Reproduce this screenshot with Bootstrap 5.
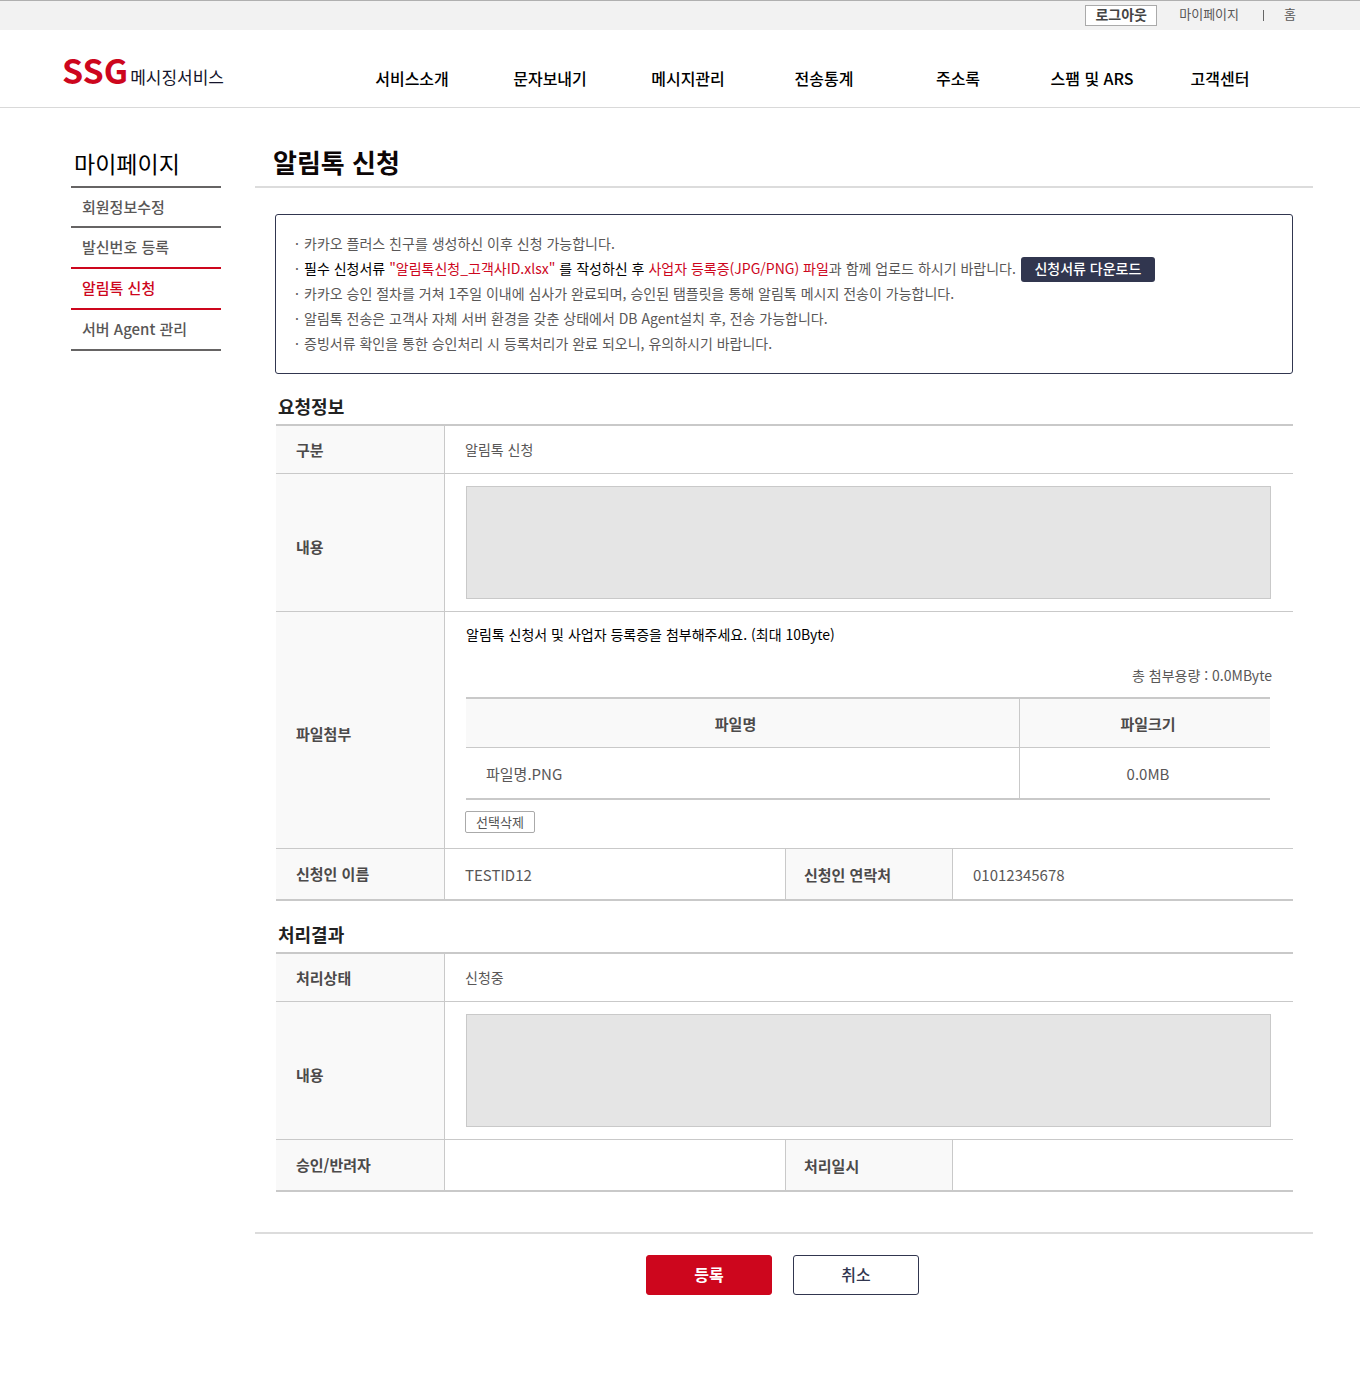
<!DOCTYPE html>
<html lang="ko">
<head>
<meta charset="utf-8">
<meta name="viewport" content="width=device-width, initial-scale=1">
<title>알림톡 신청 - SSG 메시징서비스</title>
<link href="https://cdn.jsdelivr.net/npm/bootstrap@5.3.0/dist/css/bootstrap.min.css" rel="stylesheet">
<style>
  :root { --brand: #cd061d; --navy: #31364f; --line: #c9c9c9; --soft: #dcdcdc; --ink: #595757; }
  body { font-family: "Noto Sans CJK KR", "Noto Sans", sans-serif; font-size: 14px; line-height: 20px; color: var(--ink); background: #fff; }
  a { color: inherit; text-decoration: none; }
  .util-bar { height: 30px; background: #f2f2f2; border-top: 1px solid #b0b0b0; padding-right: 64px; font-size: 13px; }
  .util-bar a { padding-bottom: 4px; }
  .btn-logout { height: 21px; width: 72px; border: 1px solid #aaa; background: #fff; color: #444; font-size: 14px; line-height: 17px; font-weight: 700; padding: 0 0 2px; margin-right: 22px; }
  .util-sep { width: 1px; height: 11px; background: #666; margin: 0 20px 0 24px; }
  .site-head { height: 78px; border-bottom: 1px solid #d9d9d9; padding: 0 79px 0 62px; }
  .logo { width: 281px; color: #14142b; font-size: 17px; padding-top: 3px; }
  .logo strong { color: var(--brand); font-size: 34px; line-height: 40px; margin-right: 2px; }
  .main-menu { display: grid; grid-template-columns: 138fr 138fr 138fr 134fr 134fr 134fr 122fr; font-size: 16px; font-weight: 500; color: #000; text-align: center; padding-top: 18px; }
  .page { padding: 38px 47px 79px 71px; gap: 34px; }
  .side { width: 150px; }
  .side h2 { font-size: 23px; line-height: 34px; height: 42px; margin: 0; padding-left: 3px; color: #000; font-weight: 400; border-bottom: 2px solid #666464; }
  .side a { display: flex; align-items: center; height: 41px; padding: 0 0 1px 11px; font-size: 15px; font-weight: 500; border-bottom: 2px solid #666464; }
  .side li:first-child a { height: 40px; }
  .side .before-current { border-color: var(--brand); }
  .side .current { border-color: var(--brand); color: var(--brand); }
  .page-title { font-size: 26px; line-height: 32px; height: 42px; margin: 0; padding-left: 18px; font-weight: 700; color: #0d0606; border-bottom: 2px solid var(--soft); }
  .body-pad { padding: 26px 20px 0; }
  .notice { font-family: "Noto Sans CJK JP", "Noto Sans CJK KR", sans-serif; border: 1px solid var(--navy); border-radius: 3px; padding: 16px 18px 17px; line-height: 25px; margin: 0; list-style: none; }
  .notice li { display: flex; gap: 4px; }
  .notice li::before { content: "·"; width: 6px; text-align: center; }
  .notice b { font-weight: 400; color: #000; }
  .notice em { font-style: normal; font-weight: 400; color: var(--brand); }
  .btn-down { background: var(--navy); color: #fff; border: 0; border-radius: 3px; height: 25px; width: 134px; font-size: 14px; line-height: 22px; font-weight: 500; padding: 0 0 3px; margin: 1px 0 -1px 1px; }
  .sec-title { font-size: 18px; line-height: 26px; margin: 19px 0 5px 3px; font-weight: 700; color: #222; }
  .sec-next { margin-top: 20px; }
  .form-grid { width: calc(100% - 1px); margin-left: 1px; table-layout: fixed; border-collapse: separate; border-spacing: 0; border-top: 2px solid var(--line); border-bottom: 1px solid var(--line); }
  .form-grid > tbody > tr > * { border-bottom: 1px solid var(--line); padding: 0 20px; vertical-align: middle; }
  .form-grid > tbody > tr > th { background: #f9f9f9; color: #4c4a4a; font-size: 15px; font-weight: 700; border-right: 1px solid var(--line); }
  .form-grid > tbody > tr > td + th { border-left: 1px solid var(--line); padding-left: 18px; }
  .form-grid > tbody > .row-sm > td { padding-bottom: 2px; }
  .form-grid > tbody > .row-md > * + * { padding-top: 2px; }
  .form-grid > tbody > .row-lg > th { padding-top: 8px; }
  .col-label { width: 169px; }
  .col-label2 { width: 168px; }
  .row-sm { height: 48px; }
  .row-md { height: 51px; font-size: 15px; }
  .form-grid > tbody > tr > td.area-cell { padding: 12px 22px 12px 21px; }
  .area-cell textarea { display: block; width: 100%; height: 113px; resize: none; background: #e5e5e5; border: 1px solid var(--line); border-radius: 0; padding: 8px; }
  .form-grid > tbody > tr > td.file-cell { padding: 12px 21px 15px 20px; }
  .file-cell .guide { color: #000; padding-left: 1px; margin-bottom: 21px; }
  .file-cell .total { text-align: right; margin-bottom: 12px; }
  .files { width: calc(100% - 3px); margin: 0 2px 11px 1px; table-layout: fixed; border-collapse: separate; border-spacing: 0; border-top: 2px solid var(--line); border-bottom: 2px solid var(--line); font-size: 15px; }
  .files th { height: 49px; background: #f9f9f9; border-bottom: 1px solid var(--line); text-align: center; color: #4c4a4a; padding: 2px 14px 0 0; }
  .files td { height: 50px; padding: 2px 20px 0; }
  .files .size { width: 251px; border-left: 1px solid var(--line); padding: 2px 0 0 6px; }
  .btn-del { display: block; width: 70px; height: 22px; border: 1px solid #aaa; border-radius: 2px; background: #fff; color: #555; font-size: 13px; line-height: 18px; padding: 0; }
  .actions { border-top: 2px solid var(--soft); margin-top: 40px; padding: 21px 3px 0 0; gap: 21px; }
  .actions button { width: 126px; height: 40px; border-radius: 3px; font-size: 16px; font-weight: 700; padding: 0 0 2px; }
  .btn-ok { background: var(--brand); border: 1px solid var(--brand); color: #fff; }
  .actions .btn-no { background: #fff; border: 1px solid var(--navy); color: var(--navy); font-weight: 500; }
</style>
</head>
<body>
<div class="util-bar d-flex justify-content-end align-items-center">
  <button type="button" class="btn-logout">로그아웃</button>
  <a href="#">마이페이지</a><span class="util-sep"></span><a href="#">홈</a>
</div>
<header class="site-head d-flex">
  <a href="#" class="logo flex-shrink-0 d-flex align-items-center"><span class="text-nowrap"><strong>SSG</strong>메시징서비스</span></a>
  <nav class="main-menu flex-grow-1 align-items-center">
    <a href="#">서비스소개</a><a href="#">문자보내기</a><a href="#">메시지관리</a><a href="#">전송통계</a><a href="#">주소록</a><a href="#">스팸 및 ARS</a><a href="#">고객센터</a>
  </nav>
</header>
<div class="page d-flex align-items-start">
  <aside class="side flex-shrink-0">
    <h2>마이페이지</h2>
    <ul class="list-unstyled mb-0">
      <li><a href="#">회원정보수정</a></li>
      <li><a href="#" class="before-current">발신번호 등록</a></li>
      <li><a href="#" class="current" aria-current="page">알림톡 신청</a></li>
      <li><a href="#">서버 Agent 관리</a></li>
    </ul>
  </aside>
  <main class="flex-grow-1">
    <h1 class="page-title">알림톡 신청</h1>
    <div class="body-pad">
      <ul class="notice">
        <li>카카오 플러스 친구를 생성하신 이후 신청 가능합니다.</li>
        <li><div><b>필수 신청서류 </b><em>"알림톡신청_고객사ID.xlsx"</em><b> 를 작성하신 후 </b><em>사업자 등록증(JPG/PNG) 파일</em>과 함께 업로드 하시기 바랍니다.</div><button type="button" class="btn-down">신청서류 다운로드</button></li>
        <li>카카오 승인 절차를 거쳐 1주일 이내에 심사가 완료되며, 승인된 탬플릿을 통해 알림톡 메시지 전송이 가능합니다.</li>
        <li>알림톡 전송은 고객사 자체 서버 환경을 갖춘 상태에서 DB Agent설치 후, 전송 가능합니다.</li>
        <li>증빙서류 확인을 통한 승인처리 시 등록처리가 완료 되오니, 유의하시기 바랍니다.</li>
      </ul>

      <h2 class="sec-title">요청정보</h2>
      <table class="form-grid">
        <colgroup><col class="col-label"><col><col class="col-label2"><col></colgroup>
        <tbody>
          <tr class="row-sm"><th scope="row">구분</th><td colspan="3">알림톡 신청</td></tr>
          <tr class="row-lg"><th scope="row"><label for="reqText">내용</label></th><td colspan="3" class="area-cell"><textarea id="reqText" readonly></textarea></td></tr>
          <tr class="row-lg">
            <th scope="row">파일첨부</th>
            <td colspan="3" class="file-cell">
              <div class="guide">알림톡 신청서 및 사업자 등록증을 첨부해주세요. (최대 10Byte)</div>
              <div class="total">총 첨부용량 : 0.0MByte</div>
              <table class="files">
                <thead><tr><th scope="col">파일명</th><th scope="col" class="size">파일크기</th></tr></thead>
                <tbody><tr><td>파일명.PNG</td><td class="size text-center">0.0MB</td></tr></tbody>
              </table>
              <button type="button" class="btn-del">선택삭제</button>
            </td>
          </tr>
          <tr class="row-md"><th scope="row">신청인 이름</th><td>TESTID12</td><th scope="row">신청인 연락처</th><td>01012345678</td></tr>
        </tbody>
      </table>

      <h2 class="sec-title sec-next">처리결과</h2>
      <table class="form-grid">
        <colgroup><col class="col-label"><col><col class="col-label2"><col></colgroup>
        <tbody>
          <tr class="row-sm"><th scope="row">처리상태</th><td colspan="3">신청중</td></tr>
          <tr class="row-lg"><th scope="row"><label for="resText">내용</label></th><td colspan="3" class="area-cell"><textarea id="resText" readonly></textarea></td></tr>
          <tr class="row-md"><th scope="row">승인/반려자</th><td></td><th scope="row">처리일시</th><td></td></tr>
        </tbody>
      </table>
    </div>
    <div class="actions d-flex justify-content-center">
      <button type="submit" class="btn-ok">등록</button>
      <button type="button" class="btn-no">취소</button>
    </div>
  </main>
</div>
<script src="https://cdn.jsdelivr.net/npm/bootstrap@5.3.0/dist/js/bootstrap.bundle.min.js"></script>
</body>
</html>
